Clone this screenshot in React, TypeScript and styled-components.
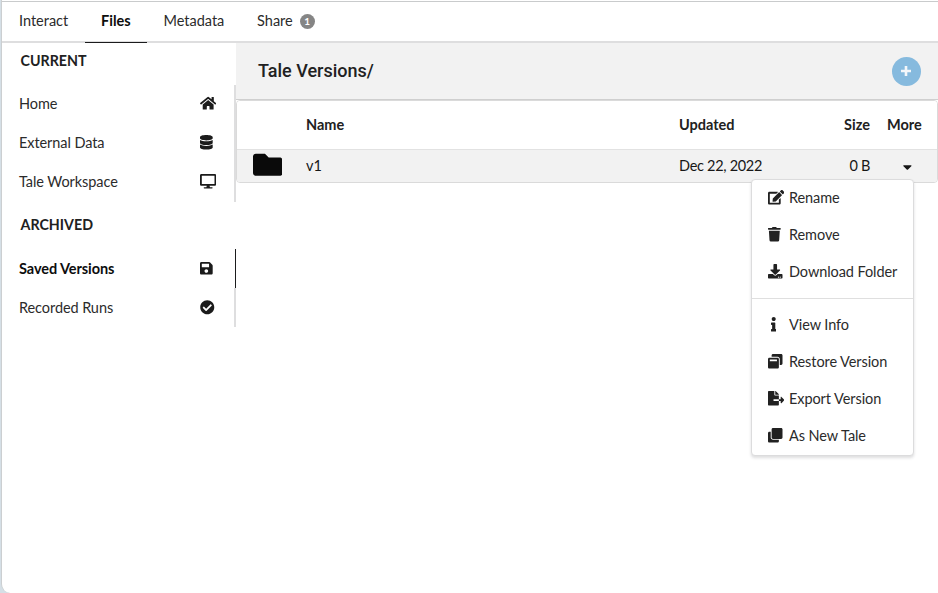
import React from "react";
import styled, { createGlobalStyle } from "styled-components";
import {
  FaCaretDown, FaCheckCircle, FaClone, FaDatabase, FaDesktop, FaDownload, FaEdit,
  FaFileExport, FaFolder, FaHome, FaInfo, FaSave, FaTrash, FaWindowRestore,
} from "react-icons/fa";
import type { IconType } from "react-icons";

const GlobalStyle = createGlobalStyle`
  * { box-sizing: border-box; }
  body {
    margin: 0;
    background: #d5dfe6;
    color: #212121;
    font: 15px/20px Lato, sans-serif;
    overflow: hidden;
  }
`;

const Panel = styled.div`
  height: 593px;
  margin-left: 1px;
  background: #fff;
  border: solid #cccfd1;
  border-width: 0 0 0 1px;
  border-bottom-left-radius: 9px;
  padding-top: 1px;
`;

const TabBar = styled.nav`
  display: flex;
  height: 42px;
  padding-left: 0.6px;
  border-top: 1px solid #c9cbcc;
  border-bottom: 2px solid #dededf;
`;

const Tab = styled.a<{ $active?: boolean }>`
  display: flex;
  align-items: center;
  height: 41px;
  padding: 0 16.4px 2px;
  border-bottom: 1px solid ${(p) => (p.$active ? "#1b1c1d" : "transparent")};
  color: ${(p) => (p.$active ? "#0d0d0d" : "#2b2b2b")};
  font-size: 14.5px;
  font-weight: ${(p) => (p.$active ? 700 : 400)};
`;

const Count = styled.span`
  width: 15px;
  height: 15px;
  margin-left: 7px;
  border-radius: 50%;
  background: #858585;
  color: #fff;
  font-size: 10px;
  font-weight: 700;
  line-height: 15px;
  text-align: center;
`;

const Body = styled.div`
  display: flex;
`;

const Sidebar = styled.aside`
  width: 234px;
  flex: none;
`;

const GroupTitle = styled.h4<{ $tall?: boolean }>`
  margin: 0;
  height: ${(p) => (p.$tall ? 47 : 42)}px;
  padding: ${(p) => (p.$tall ? 13 : 8)}px 0 0 18.5px;
  font-size: 14.25px;
  font-weight: 700;
  line-height: 20px;
`;

const SideItem = styled.a<{ $active?: boolean; $raised?: boolean }>`
  display: flex;
  align-items: center;
  justify-content: space-between;
  height: 39px;
  padding: 0 18px ${(p) => (p.$raised ? 2 : 0)}px 17px;
  background: linear-gradient(
      ${(p) => (p.$active ? "#1b1c1d, #1b1c1d" : "#dededf, #dededf")}
    ) right / ${(p) => (p.$active ? 1 : 2)}px 100% no-repeat;
  color: ${(p) => (p.$active ? "#0d0d0d" : "#2b2b2b")};
  font-size: 14.5px;
  font-weight: ${(p) => (p.$active ? 700 : 400)};
  letter-spacing: -0.08px;
`;

const IconBox = styled.span<{ $ratio: number }>`
  display: flex;
  width: 18px;
  font-size: 14.5px;
  color: #1b1b1b;
  svg { flex: none; width: ${(p) => p.$ratio}em; }
`;

const Main = styled.main`
  flex: 1;
  min-width: 0;
`;

const TitleBar = styled.header`
  display: flex;
  align-items: center;
  justify-content: space-between;
  height: 57px;
  padding: 0 17px 0 22px;
  background: #f2f2f2;
  border-bottom: 1px solid #cfcfcf;
`;

const Title = styled.h1`
  margin: 0;
  color: #212121;
  font: 500 18px/24px Roboto, sans-serif;
`;

const AddButton = styled.button`
  display: grid;
  place-items: center;
  width: 29px;
  height: 29px;
  padding: 0 1px 0 0;
  border: 0;
  border-radius: 50%;
  background: #86bade;
`;

const Table = styled.section`
  border: 1px solid #dadada;
  border-radius: 4px;
  overflow: hidden;
`;

const Row = styled.div<{ $head?: boolean }>`
  display: grid;
  grid-template-columns: 69px 373px 110px 81px 1fr;
  align-items: center;
  height: ${(p) => (p.$head ? 48 : 33)}px;
  padding-bottom: ${(p) => (p.$head ? 0 : 2)}px;
  background: ${(p) => (p.$head ? "#fff" : "#f2f2f2")};
  border-top: ${(p) => (p.$head ? "0" : "1px solid #e2e2e2")};
  color: ${(p) => (p.$head ? "#212121" : "#171717")};
  font-size: 14.5px;
  font-weight: ${(p) => (p.$head ? 700 : 400)};
`;

const Cell = styled.span<{ $end?: boolean; $pad?: number; $tight?: boolean }>`
  display: flex;
  justify-content: ${(p) => (p.$end ? "flex-end" : "flex-start")};
  padding-left: ${(p) => p.$pad ?? 0}px;
  letter-spacing: ${(p) => (p.$tight ? "-0.3px" : "normal")};
`;

const FolderCell = styled(Cell)`
  padding: 0 0 3px 15.5px;
`;

const Anchor = styled.span`
  display: flex;
  padding: 1px 0 0 33px;
  font-size: 14px;
  svg { width: 0.625em; }
`;

const Menu = styled.div`
  position: absolute;
  top: 179px;
  left: 751px;
  width: 163px;
  height: 277px;
  background: #fff;
  border: 1px solid #dcdcdd;
  border-radius: 4px;
  box-shadow: 0 2px 3px rgba(34, 36, 38, 0.15);
`;

const MenuItem = styled.a`
  display: flex;
  align-items: center;
  height: 37px;
  padding: 0 0 1px 16px;
  color: #2b2b2b;
  font-size: 14.5px;
  letter-spacing: -0.08px;
  white-space: nowrap;
`;

const MenuIcon = styled.span<{ $indent?: number; $ratio: number }>`
  display: flex;
  flex: none;
  width: 21px;
  padding: 0 0 1px ${(p) => p.$indent ?? 0}px;
  color: #212121;
  font-size: 14.5px;
  svg { flex: none; width: ${(p) => p.$ratio}em; }
`;

const Divider = styled.hr`
  height: 1px;
  margin: 7px 0 8px;
  border: 0;
  background: #dfdfdf;
`;

// ratio is the glyph's width relative to its height
type Entry = { label: string; icon: IconType; ratio: number; active?: boolean; indent?: number };

const current: Entry[] = [
  { label: "Home", icon: FaHome, ratio: 1.125 },
  { label: "External Data", icon: FaDatabase, ratio: 0.875 },
  { label: "Tale Workspace", icon: FaDesktop, ratio: 1.125 },
];
const archived: Entry[] = [
  { label: "Saved Versions", icon: FaSave, ratio: 0.875, active: true },
  { label: "Recorded Runs", icon: FaCheckCircle, ratio: 1 },
];
const folderActions: Entry[] = [
  { label: "Rename", icon: FaEdit, ratio: 1.125 },
  { label: "Remove", icon: FaTrash, ratio: 0.875 },
  { label: "Download Folder", icon: FaDownload, ratio: 1 },
];
const versionActions: Entry[] = [
  { label: "View Info", icon: FaInfo, ratio: 0.375, indent: 3 },
  { label: "Restore Version", icon: FaWindowRestore, ratio: 1 },
  { label: "Export Version", icon: FaFileExport, ratio: 1.125 },
  { label: "As New Tale", icon: FaClone, ratio: 1 },
];

const SideList = ({ items, raised }: { items: Entry[]; raised?: boolean }) => (
  <>
    {items.map(({ label, icon: Icon, ratio, active }) => (
      <SideItem key={label} $active={active} $raised={raised}>
        {label}
        <IconBox $ratio={ratio}><Icon /></IconBox>
      </SideItem>
    ))}
  </>
);

const MenuList = ({ items }: { items: Entry[] }) => (
  <>
    {items.map(({ label, icon: Icon, ratio, indent }) => (
      <MenuItem key={label}>
        <MenuIcon $indent={indent} $ratio={ratio}><Icon /></MenuIcon>
        {label}
      </MenuItem>
    ))}
  </>
);

const PlusIcon = () => (
  <svg width="10" height="10" viewBox="0 0 10 10" stroke="#f4f7fa" strokeWidth="2.6">
    <path d="M0 5H10M5 0V10" />
  </svg>
);

export default function App() {
  return (
    <>
      <GlobalStyle />
      <Panel>
        <TabBar>
          <Tab>Interact</Tab>
          <Tab $active>Files</Tab>
          <Tab>Metadata</Tab>
          <Tab>Share<Count>1</Count></Tab>
        </TabBar>
        <Body>
          <Sidebar>
            <GroupTitle>CURRENT</GroupTitle>
            <SideList items={current} raised />
            <GroupTitle $tall>ARCHIVED</GroupTitle>
            <SideList items={archived} />
          </Sidebar>
          <Main>
            <TitleBar>
              <Title>Tale Versions/</Title>
              <AddButton aria-label="Add"><PlusIcon /></AddButton>
            </TitleBar>
            <Table>
              <Row $head>
                <Cell />
                <Cell>Name</Cell>
                <Cell>Updated</Cell>
                <Cell $end>Size</Cell>
                <Cell $pad={17}>More</Cell>
              </Row>
              <Row>
                <FolderCell><FaFolder size={29.5} color="#0a0a0a" /></FolderCell>
                <Cell>v1</Cell>
                <Cell $tight>Dec 22, 2022</Cell>
                <Cell $end $tight>0 B</Cell>
                <Anchor><FaCaretDown /></Anchor>
              </Row>
            </Table>
          </Main>
        </Body>
      </Panel>
      <Menu>
        <MenuList items={folderActions} />
        <Divider />
        <MenuList items={versionActions} />
      </Menu>
    </>
  );
}
